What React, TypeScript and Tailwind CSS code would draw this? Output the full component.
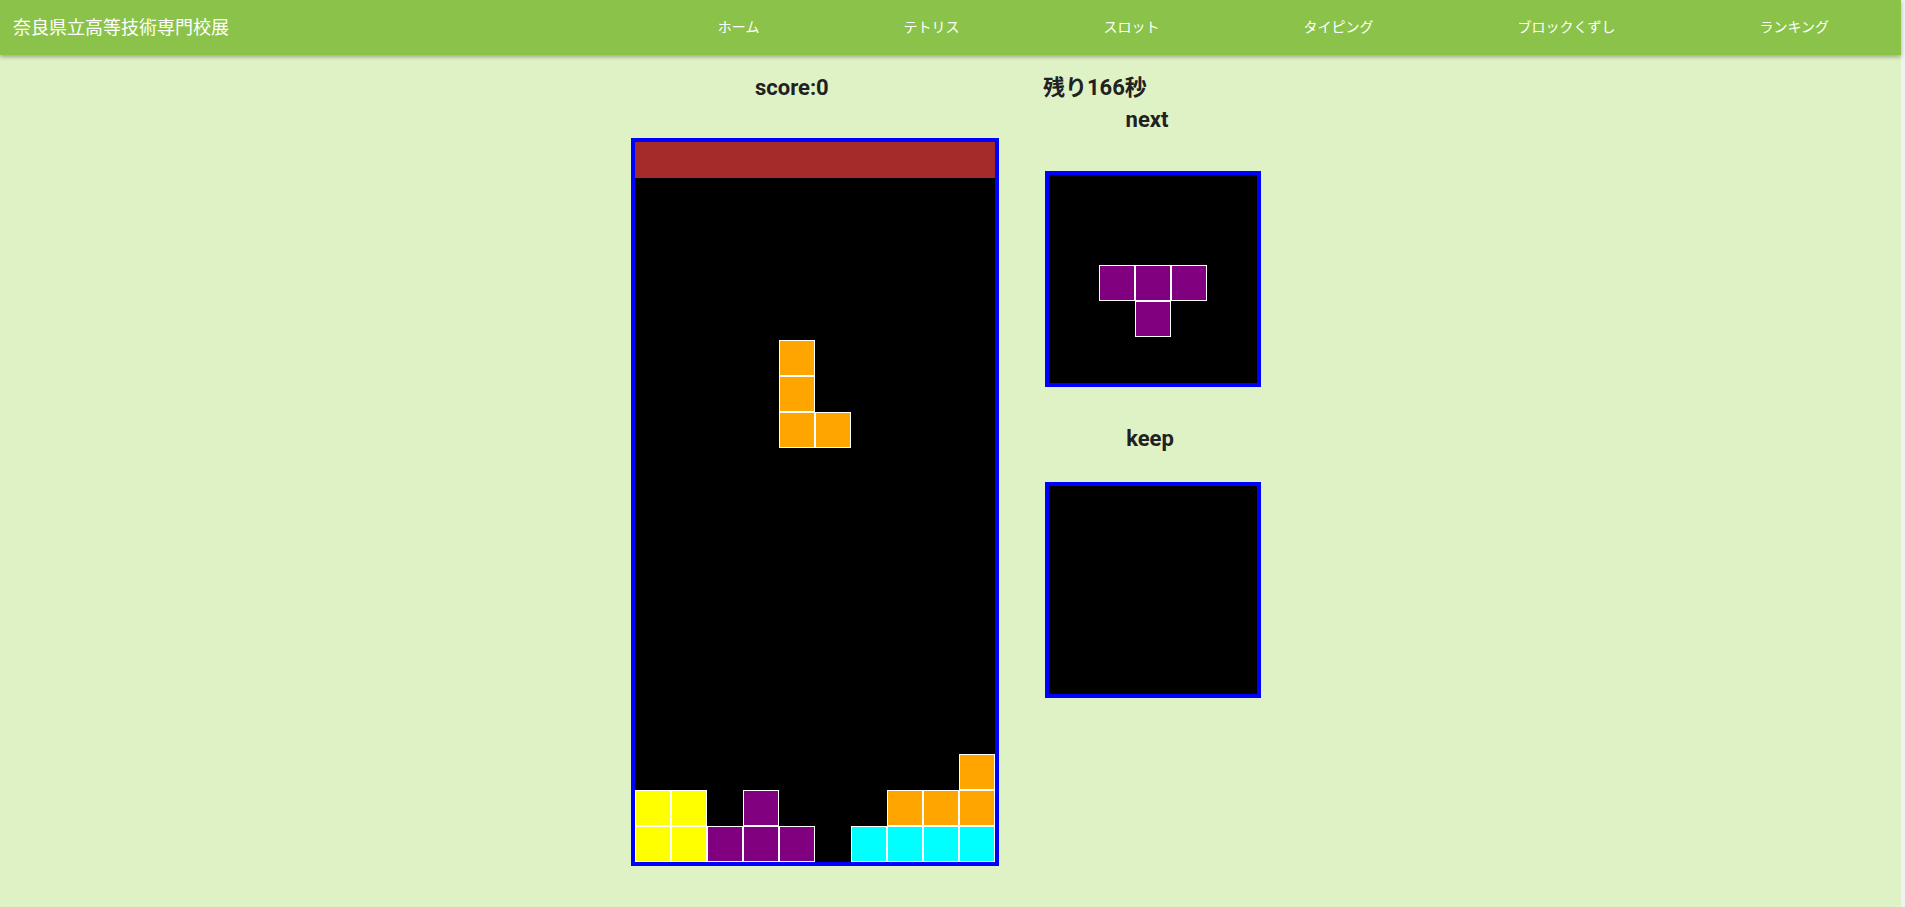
import React from 'react';

type Cell = { x: number; y: number; color: string };

const CELL = 36;

const ORANGE = '#ffa500';
const PURPLE = '#800080';
const YELLOW = '#ffff00';
const CYAN = '#00ffff';

const navItems = ['ホーム', 'テトリス', 'スロット', 'タイピング', 'ブロックくずし', 'ランキング'];

// settled blocks, [col, row]
const stack: Cell[] = [
  { x: 9, y: 17, color: ORANGE },
  { x: 0, y: 18, color: YELLOW },
  { x: 1, y: 18, color: YELLOW },
  { x: 3, y: 18, color: PURPLE },
  { x: 7, y: 18, color: ORANGE },
  { x: 8, y: 18, color: ORANGE },
  { x: 9, y: 18, color: ORANGE },
  { x: 0, y: 19, color: YELLOW },
  { x: 1, y: 19, color: YELLOW },
  { x: 2, y: 19, color: PURPLE },
  { x: 3, y: 19, color: PURPLE },
  { x: 4, y: 19, color: PURPLE },
  { x: 6, y: 19, color: CYAN },
  { x: 7, y: 19, color: CYAN },
  { x: 8, y: 19, color: CYAN },
  { x: 9, y: 19, color: CYAN },
];

// falling piece drifts between rows
const falling: Cell[] = [
  { x: 4, y: 5.5, color: ORANGE },
  { x: 4, y: 6.5, color: ORANGE },
  { x: 4, y: 7.5, color: ORANGE },
  { x: 5, y: 7.5, color: ORANGE },
];

function Block({ px, py, color }: { px: number; py: number; color: string }) {
  return <rect x={px + 0.5} y={py + 0.5} width={CELL - 1} height={CELL - 1} fill={color} stroke="#ffffff" strokeWidth={1} />;
}

function Board() {
  return (
    <div className="border-4 border-[#0000ff] bg-black">
      <svg width={360} height={720} className="block">
        <rect x={0} y={0} width={360} height={36} fill="#a52a2a" />
        {stack.concat(falling).map((c, i) => (
          <Block key={i} px={c.x * CELL} py={c.y * CELL} color={c.color} />
        ))}
      </svg>
    </div>
  );
}

function PreviewBox({ cells }: { cells: { px: number; py: number; color: string }[] }) {
  return (
    <div className="border-4 border-[#0000ff] bg-black">
      <svg width={208} height={208} className="block">
        {cells.map((c, i) => (
          <Block key={i} px={c.px} py={c.py} color={c.color} />
        ))}
      </svg>
    </div>
  );
}

const nextPiece = [
  { px: 50, py: 90, color: PURPLE },
  { px: 86, py: 90, color: PURPLE },
  { px: 122, py: 90, color: PURPLE },
  { px: 86, py: 126, color: PURPLE },
];

export default function App() {
  return (
    <div className="min-h-screen bg-[#f1f1f1] font-['Roboto','Noto_Sans_CJK_JP',sans-serif]">
      <div className="w-[1901px] min-h-[907px] bg-[#dff2c5]">
        <header className="h-[55px] bg-[#8bc34a] flex items-center shadow-[0_2px_4px_rgba(0,0,0,0.3)]">
          <div className="pl-[13px] pb-[3px] text-[18px] text-white font-['Noto_Sans_CJK_JP',sans-serif]">奈良県立高等技術専門校展</div>
          <nav className="ml-auto flex">
            {navItems.map((n) => (
              <a key={n} className="px-[72px] pb-[2px] text-[14px] text-white font-['Noto_Sans_CJK_JP',sans-serif]">{n}</a>
            ))}
          </nav>
        </header>

        <main className="ml-[631px] text-[#212121] text-[22px] font-bold">
          <div className="mt-[22px] flex h-[22px] leading-[22px]">
            <div className="w-[412px] pl-[124px]">score:0</div>
            <div>残り166秒</div>
          </div>

          <div className="flex items-start">
            <div className="mt-[39px]">
              <Board />
            </div>
            <div className="ml-[46px] w-[216px] mt-[10px]">
              <div className="h-[22px] leading-[22px] text-center pr-[12px]">next</div>
              <div className="mt-[40px]">
                <PreviewBox cells={nextPiece} />
              </div>
              <div className="mt-[41px] h-[22px] leading-[22px] text-center pr-[6px]">keep</div>
              <div className="mt-[32px]">
                <PreviewBox cells={[]} />
              </div>
            </div>
          </div>
        </main>
      </div>
    </div>
  );
}
